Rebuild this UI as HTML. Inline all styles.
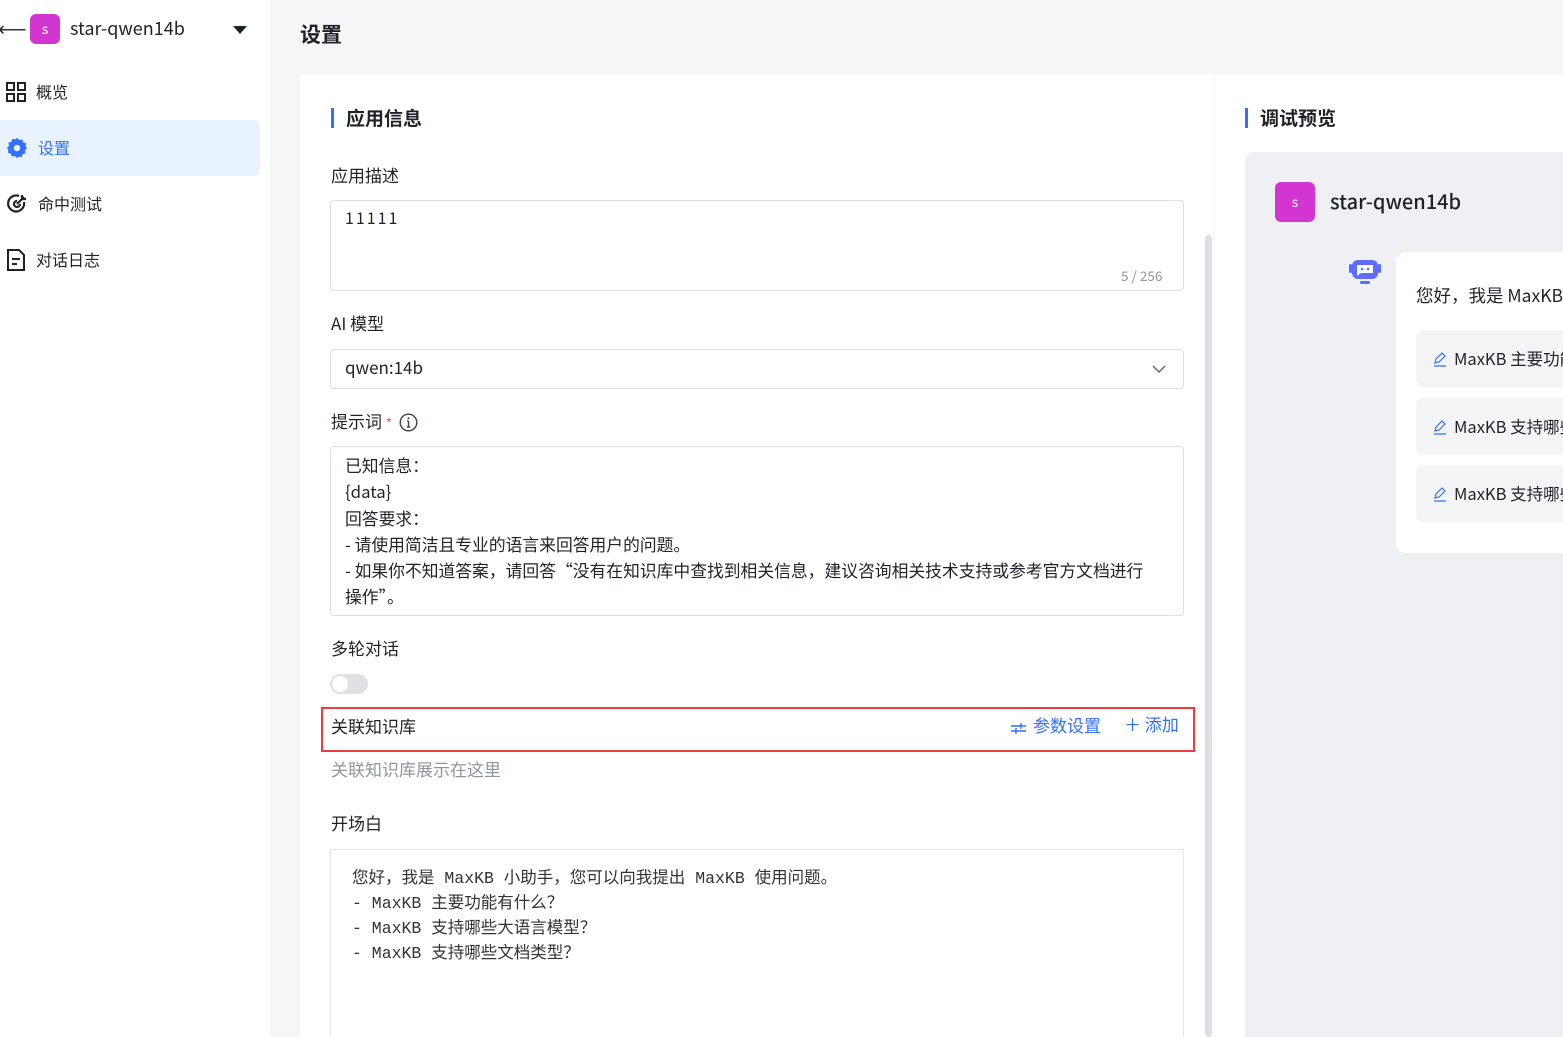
<!DOCTYPE html>
<html><head><meta charset="utf-8"><style>
*{margin:0;padding:0;box-sizing:border-box}
html,body{width:1563px;height:1037px;overflow:hidden}
body{background:#f5f6f7;font-family:"Noto Sans CJK SC","Liberation Sans",sans-serif;color:#1f2329;position:relative}
.a{position:absolute;line-height:1.35}
.side{left:0;top:0;width:270px;height:1037px;background:#fff}
.mi{left:0;width:260px;height:56px;display:flex;align-items:center;padding-left:6px;font-size:16px;color:#1f2329}
.mi span{margin-left:10px}
.card{left:300px;top:74px;width:914px;height:963px;background:#fff}
.rp{left:1215px;top:74px;width:348px;height:963px;background:#fff}
.lbl{font-size:17px;color:#1f2329}
.box{border:1px solid #dcdfe6;border-radius:4px;background:#fff}
.h{font-size:19px;font-weight:bold;padding-left:12px;border-left:3px solid #3370ff;line-height:20px}
.q{left:1416px;width:160px;height:57px;background:#f3f4f6;border-radius:8px;display:flex;align-items:center;padding-left:16px;font-size:16.5px;color:#1f2329;white-space:nowrap;overflow:hidden}
.q svg{margin-right:6px;flex:none}
</style></head><body>
<div class="a side"></div>
<div class="a" style="left:-2px;top:14px;font-size:20px;color:#333">⟵</div>
<div class="a" style="left:30px;top:14px;width:30px;height:30px;background:#d335d1;border-radius:6px;color:#fff;font-size:14px;text-align:center;line-height:30px">s</div>
<div class="a" style="left:70px;top:16px;font-size:18px;color:#1f2329">star-qwen14b</div>
<div class="a" style="left:233px;top:26px;width:0;height:0;border-left:7px solid transparent;border-right:7px solid transparent;border-top:8px solid #1f2329"></div>
<div class="a mi" style="top:64px"><svg width="20" height="20" viewBox="0 0 20 20" fill="none" stroke="#1f2329" stroke-width="2"><rect x="1" y="1" width="7" height="7"/><rect x="12" y="1" width="7" height="7"/><rect x="1" y="12" width="7" height="7"/><rect x="12" y="12" width="7" height="7"/></svg><span>概览</span></div>
<div class="a mi" style="top:120px;background:#e8f3ff;border-radius:0 6px 6px 0;color:#3370ff"><svg width="22" height="22" viewBox="0 0 24 24"><path fill="#3370ff" d="M12 1l2.5 2.3 3.3-.6 1 3.2 3.2 1-.6 3.3L23 12l-2.3 2.5.6 3.3-3.2 1-1 3.2-3.3-.6L12 23l-2.5-2.3-3.3.6-1-3.2-3.2-1 .6-3.3L1 12l2.3-2.5-.6-3.3 3.2-1 1-3.2 3.3.6z"/><circle cx="12" cy="12" r="3.5" fill="#e8f3ff"/></svg><span>设置</span></div>
<div class="a mi" style="top:176px"><svg width="22" height="22" viewBox="0 0 22 22" fill="none" stroke="#1f2329" stroke-width="2.2"><path d="M18 9a8 8 0 1 1-5-6"/><path d="M14 11a3 3 0 1 1-3-3"/><path d="M11 11l7-7M16 2v4h4"/></svg><span>命中测试</span></div>
<div class="a mi" style="top:232px"><svg width="20" height="24" viewBox="0 0 20 24" fill="none" stroke="#1f2329" stroke-width="2"><path d="M2 2h11l5 5v15H2z"/><path d="M6 11h8M6 16h5"/></svg><span>对话日志</span></div>

<div class="a" style="left:300px;top:20px;font-size:21px;font-weight:bold">设置</div>
<div class="a card"></div>
<div class="a" style="left:1205px;top:235px;width:7px;height:802px;background:#dddfe3;border-radius:4px"></div>
<div class="a rp"></div>

<div class="a h" style="left:331px;top:108px">应用信息</div>
<div class="a lbl" style="left:331px;top:164px">应用描述</div>
<div class="a box" style="left:330px;top:200px;width:854px;height:91px"></div>
<div class="a" style="left:345px;top:207px;font-size:16px;letter-spacing:2px">11111</div>
<div class="a" style="left:1121px;top:266px;font-size:13.5px;color:#8f959e">5 / 256</div>
<div class="a lbl" style="left:331px;top:312px">AI 模型</div>
<div class="a box" style="left:330px;top:349px;width:854px;height:40px"></div>
<div class="a" style="left:345px;top:356px;font-size:17px">qwen:14b</div>
<svg class="a" style="left:1152px;top:364px" width="14" height="10" viewBox="0 0 14 10"><path d="M1 2l6 6 6-6" fill="none" stroke="#646a73" stroke-width="1.5"/></svg>
<div class="a lbl" style="left:331px;top:410px">提示词 <span style="color:#f54a45;font-size:13px">*</span></div>
<svg class="a" style="left:399px;top:413px" width="19" height="19" viewBox="0 0 19 19"><circle cx="9.5" cy="9.5" r="8.3" fill="none" stroke="#3d4151" stroke-width="1.4"/><path d="M9.5 8v6M8 8h1.5M8 14h3" stroke="#3d4151" stroke-width="1.4"/><circle cx="9.5" cy="5.3" r="1" fill="#3d4151"/></svg>
<div class="a box" style="left:330px;top:446px;width:854px;height:170px;overflow:hidden;padding:5px 14px;font-size:16.8px;line-height:26.3px;white-space:nowrap">已知信息：<br>{data}<br>回答要求：<br>- 请使用简洁且专业的语言来回答用户的问题。<br>- 如果你不知道答案，请回答“没有在知识库中查找到相关信息，建议咨询相关技术支持或参考官方文档进行<br>操作”。<br>- 避免提及你是从已知信息中获得的知识。</div>
<div class="a lbl" style="left:331px;top:637px">多轮对话</div>
<div class="a" style="left:330px;top:674px;width:38px;height:20px;background:#dee0e3;border-radius:10px"><div style="position:absolute;left:2px;top:2px;width:16px;height:16px;background:#fff;border-radius:50%"></div></div>
<div class="a" style="left:321px;top:707px;width:874px;height:45px;border:2px solid #ee3b3b"></div>
<div class="a lbl" style="left:331px;top:715px">关联知识库</div>
<svg class="a" style="left:1010px;top:720px" width="17" height="17" viewBox="0 0 17 17" fill="none" stroke="#3370ff" stroke-width="1.4"><path d="M1 6h15M1 11h15M11 3v6M6 8v6"/></svg>
<div class="a" style="left:1033px;top:714px;font-size:17px;color:#3370ff">参数设置</div>
<div class="a" style="left:1124px;top:713px;font-size:17px;color:#3370ff">＋ 添加</div>
<div class="a lbl" style="left:331px;top:758px;color:#8f959e">关联知识库展示在这里</div>
<div class="a lbl" style="left:331px;top:812px">开场白</div>
<div class="a" style="left:330px;top:849px;width:854px;height:188px;border:1px solid #e4e6ea;border-bottom:none;padding:16px 21px;font-family:'Liberation Mono','Noto Sans CJK SC',monospace;font-size:16.5px;line-height:25px;color:#333;white-space:nowrap">您好，我是 MaxKB 小助手，您可以向我提出 MaxKB 使用问题。<br>- MaxKB 主要功能有什么？<br>- MaxKB 支持哪些大语言模型？<br>- MaxKB 支持哪些文档类型？</div>

<div class="a h" style="left:1245px;top:108px">调试预览</div>
<div class="a" style="left:1245px;top:152px;width:330px;height:885px;background:#eef0f4;border-radius:10px 0 0 0"></div>
<div class="a" style="left:1275px;top:182px;width:40px;height:40px;background:#d335d1;border-radius:6px;color:#fff;font-size:14px;text-align:center;line-height:40px">s</div>
<div class="a" style="left:1330px;top:187px;font-size:20px;font-weight:500;color:#1f2329">star-qwen14b</div>
<svg class="a" style="left:1349px;top:259px" width="32" height="26" viewBox="0 0 32 26"><rect x="0" y="5" width="3" height="9" rx="1.5" fill="#5b6cff"/><rect x="29" y="5" width="3" height="9" rx="1.5" fill="#5b6cff"/><rect x="3" y="1" width="26" height="19" rx="6" fill="#5b6cff"/><path d="M8 6h16v8H12l-4 3z" fill="#fff"/><circle cx="13" cy="10" r="1.3" fill="#5b6cff"/><circle cx="19" cy="10" r="1.3" fill="#5b6cff"/><rect x="11" y="22" width="10" height="3" rx="1.5" fill="#5b6cff"/></svg>
<div class="a" style="left:1396px;top:252px;width:200px;height:301px;background:#fff;border-radius:10px"></div>
<div class="a" style="left:1416px;top:284px;font-size:17.5px;white-space:nowrap">您好，我是 MaxKB 小助手</div>
<div class="a q" style="top:330px"><svg width="16" height="16" viewBox="0 0 16 16" fill="none" stroke="#3370ff" stroke-width="1.2"><path d="M3 12l1-4 6-6 3 3-6 6z M2 15h12"/></svg>MaxKB 主要功能</div>
<div class="a q" style="top:398px"><svg width="16" height="16" viewBox="0 0 16 16" fill="none" stroke="#3370ff" stroke-width="1.2"><path d="M3 12l1-4 6-6 3 3-6 6z M2 15h12"/></svg>MaxKB 支持哪些</div>
<div class="a q" style="top:465px"><svg width="16" height="16" viewBox="0 0 16 16" fill="none" stroke="#3370ff" stroke-width="1.2"><path d="M3 12l1-4 6-6 3 3-6 6z M2 15h12"/></svg>MaxKB 支持哪些</div>
</body></html>
